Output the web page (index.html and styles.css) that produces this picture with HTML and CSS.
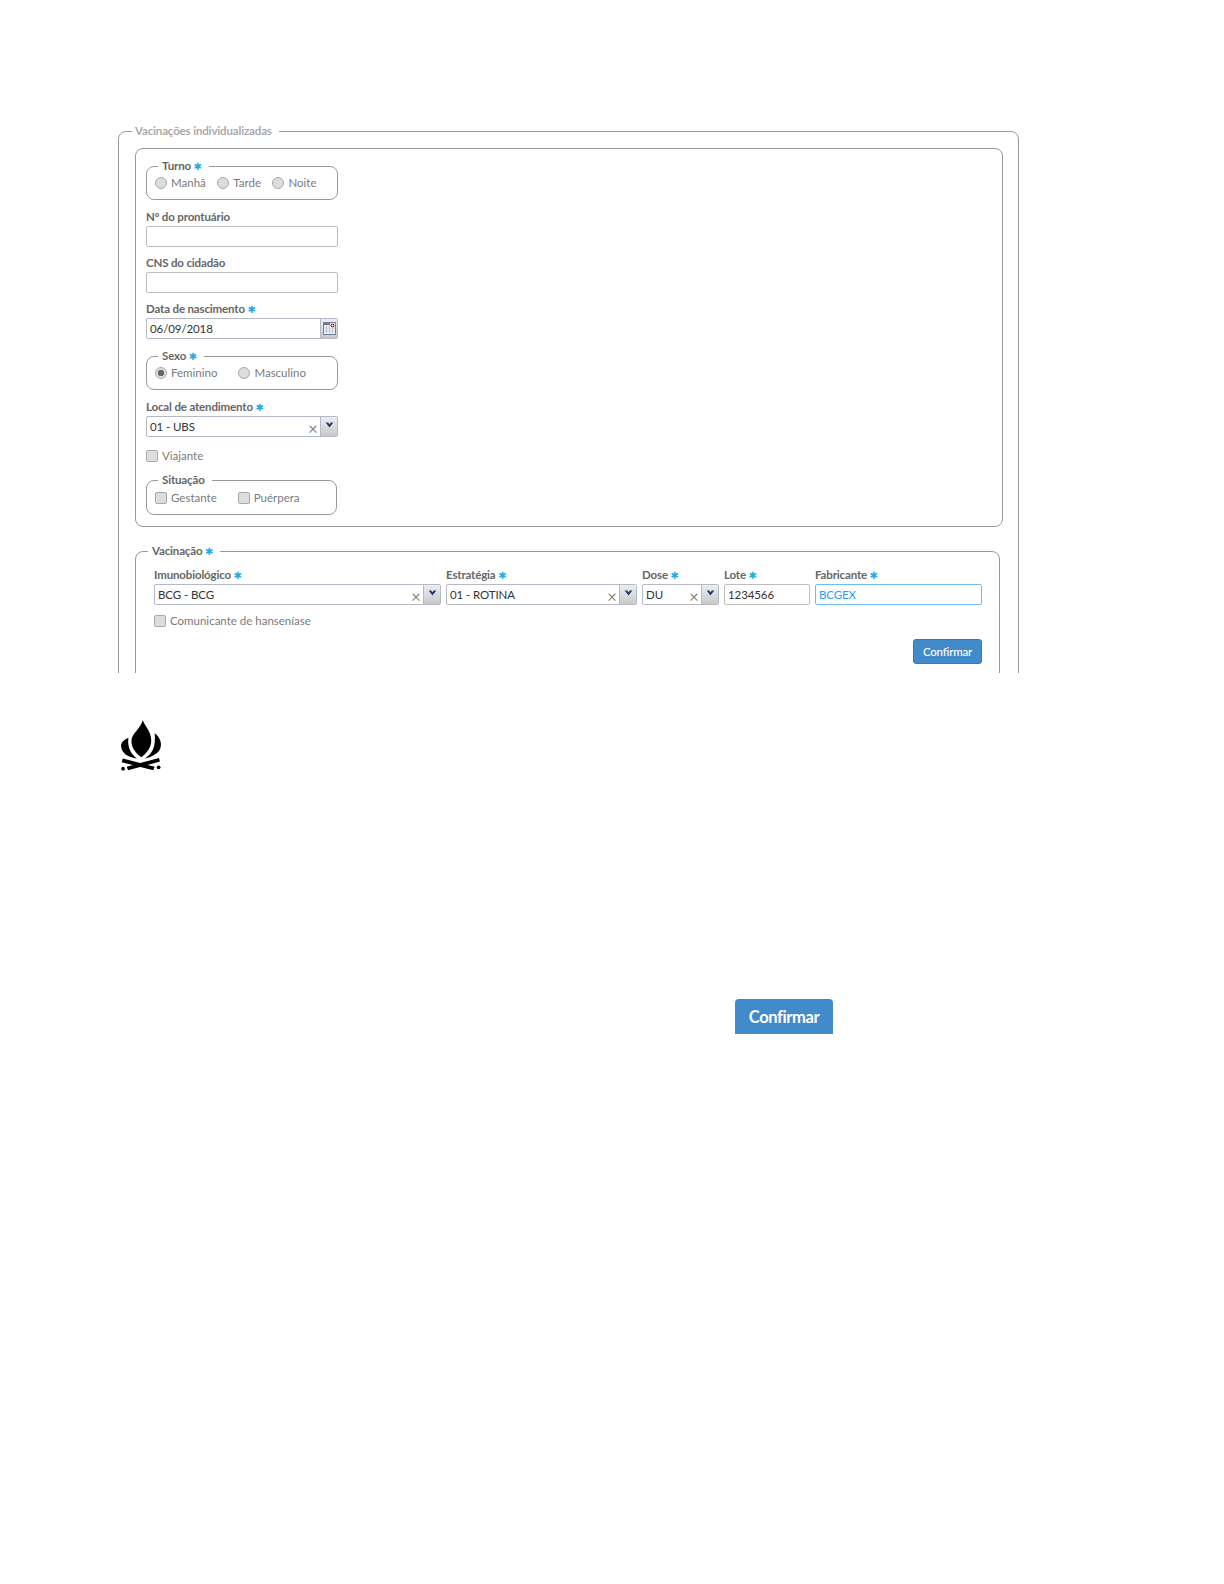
FILE: index.html
```html
<!DOCTYPE html>
<html lang="pt-BR">
<head>
  <meta charset="UTF-8">
  <title>Vacinações individualizadas</title>
  <link rel="stylesheet" href="styles.css">
</head>
<body>
  <div class="shot">
    <fieldset class="box box--outer">
      <legend class="box__title box__title--muted">Vacinações individualizadas</legend>

      <div class="patient">
        <fieldset class="box box--small">
          <legend class="box__title">Turno <span class="req">✱</span></legend>
          <div class="options">
            <label class="option"><input type="radio" name="turno"><span>Manhã</span></label>
            <label class="option"><input type="radio" name="turno"><span>Tarde</span></label>
            <label class="option"><input type="radio" name="turno"><span>Noite</span></label>
          </div>
        </fieldset>

        <div class="field field--patient">
          <div class="field__label">Nº do prontuário</div>
          <div class="input"></div>
        </div>

        <div class="field field--patient field--tight">
          <div class="field__label">CNS do cidadão</div>
          <div class="input"></div>
        </div>

        <div class="field field--patient field--tight">
          <div class="field__label">Data de nascimento <span class="req">✱</span></div>
          <div class="input input--addon">
            <span class="input__text">06/09/2018</span>
            <span class="addon">
              <svg width="13" height="13" viewBox="0 0 13 13">
                <rect x="0.5" y="0.5" width="12" height="12" fill="#eef0f5" stroke="#75839a"/>
                <rect x="1" y="1" width="11" height="2" fill="#66789a"/>
                <path d="M3.5 3v9M6.5 3v9M9.5 3v9M1 6h11M1 9h11" stroke="#c6ccd6" stroke-width="1"/>
                <rect x="7" y="1" width="5" height="5" fill="#fff"/>
                <circle cx="9.5" cy="3.5" r="1.5" fill="none" stroke="#8a1c2c" stroke-width="1.1"/>
              </svg>
            </span>
          </div>
        </div>

        <fieldset class="box box--small box--sexo">
          <legend class="box__title">Sexo <span class="req">✱</span></legend>
          <div class="options options--wide">
            <label class="option"><input type="radio" name="sexo" checked><span>Feminino</span></label>
            <label class="option"><input type="radio" name="sexo"><span>Masculino</span></label>
          </div>
        </fieldset>

        <div class="field field--patient">
          <div class="field__label">Local de atendimento <span class="req">✱</span></div>
          <div class="input input--addon">
            <span class="input__text">01 - UBS</span>
            <span class="clear">×</span>
            <span class="addon addon--arrow"><svg width="9" height="6" viewBox="0 0 10 7"><path d="M0.5 0.5h3L5 2.5l1.5-2h3L5 6.5z" fill="#24386b"/></svg></span>
          </div>
        </div>

        <label class="option option--alone"><input type="checkbox"><span>Viajante</span></label>

        <fieldset class="box box--small box--situacao">
          <legend class="box__title">Situação</legend>
          <div class="options options--wide options--check">
            <label class="option"><input type="checkbox"><span>Gestante</span></label>
            <label class="option"><input type="checkbox"><span>Puérpera</span></label>
          </div>
        </fieldset>
      </div>

      <fieldset class="box box--vaccine">
        <legend class="box__title">Vacinação <span class="req">✱</span></legend>
        <div class="vaccine-row">
          <div class="field field--imuno">
            <div class="field__label">Imunobiológico <span class="req">✱</span></div>
            <div class="input input--addon input--select">
              <span class="input__text">BCG - BCG</span>
              <span class="clear">×</span>
              <span class="addon addon--arrow"><svg width="9" height="6" viewBox="0 0 10 7"><path d="M0.5 0.5h3L5 2.5l1.5-2h3L5 6.5z" fill="#24386b"/></svg></span>
            </div>
          </div>
          <div class="field field--estrategia">
            <div class="field__label">Estratégia <span class="req">✱</span></div>
            <div class="input input--addon input--select">
              <span class="input__text">01 - ROTINA</span>
              <span class="clear">×</span>
              <span class="addon addon--arrow"><svg width="9" height="6" viewBox="0 0 10 7"><path d="M0.5 0.5h3L5 2.5l1.5-2h3L5 6.5z" fill="#24386b"/></svg></span>
            </div>
          </div>
          <div class="field field--dose">
            <div class="field__label">Dose <span class="req">✱</span></div>
            <div class="input input--addon input--select">
              <span class="input__text">DU</span>
              <span class="clear">×</span>
              <span class="addon addon--arrow"><svg width="9" height="6" viewBox="0 0 10 7"><path d="M0.5 0.5h3L5 2.5l1.5-2h3L5 6.5z" fill="#24386b"/></svg></span>
            </div>
          </div>
          <div class="field field--lote">
            <div class="field__label">Lote <span class="req">✱</span></div>
            <div class="input"><span class="input__text">1234566</span></div>
          </div>
          <div class="field field--fabricante">
            <div class="field__label">Fabricante <span class="req">✱</span></div>
            <div class="input input--focus"><span class="input__text">BCGEX</span></div>
          </div>
        </div>

        <label class="option option--comunicante"><input type="checkbox"><span>Comunicante de hanseníase</span></label>

        <div class="actions">
          <button class="btn" type="button">Confirmar</button>
        </div>
      </fieldset>
    </fieldset>
  </div>

  <svg class="flame" width="40" height="52" viewBox="47 45 119 155">
    <path d="M112 45C116 62 137 78 137 106C137 128 124 142 108 156C94 146 78 130 78 108C78 84 104 74 112 45Z"/>
    <path d="M69 98C66 122 72 142 94 160C74 158 47 146 47 122C47 110 58 104 69 98Z"/>
    <path d="M147 84C167 100 169 118 163 132C157 146 136 155 118 160C138 146 152 128 147 84Z"/>
    <path d="M52 160L49 171L143 195L147 184Z"/>
    <path d="M160 158L163 169L68 195L64 184Z"/>
    <circle cx="53" cy="190" r="5.5"/>
    <circle cx="159" cy="186" r="5.5"/>
  </svg>

  <div class="big-wrap">
    <button class="btn btn--big" type="button">Confirmar</button>
  </div>
</body>
</html>
```

FILE: styles.css
```css
* {
  margin: 0;
  box-sizing: border-box;
}

body {
  padding: 124px 0 0 118px;
  background-color: #fff;
  font-family: "Lato", sans-serif;
  font-size: 12px;
  color: #666;
}

.shot {
  width: 901px;
  height: 549px;
  overflow: hidden;
}

.box {
  min-width: 0;
  padding: 0;
  border: 1px solid #9a9a9a;
  border-radius: 8px;
}

.box__title {
  height: 14px;
  margin-left: 3px;
  padding: 0 7px 0 4px;
  font-size: 11.5px;
  font-weight: 700;
  line-height: 14px;
  letter-spacing: -0.15px;
  color: #666;
}

.box__title--muted {
  margin-left: -3px;
  padding-left: 3px;
  color: #aaa;
}

.box--outer {
  height: 700px;
  padding: 10px 15px 0 16px;
}

.patient {
  height: 379px;
  padding: 10px 10px 0;
  border: 1px solid #9a9a9a;
  border-radius: 8px;
}

.box--small {
  width: 192px;
  height: 41px;
  padding: 0 8px;
}

.box--sexo {
  margin-top: 10px;
}

.box--situacao {
  width: 191px;
  height: 42px;
  margin-top: 10px;
}

.box--vaccine {
  width: 865px;
  height: 200px;
  margin-top: 17px;
  padding: 10px 17px 0 18px;
}

.box--vaccine .box__title {
  margin-left: -6px;
}

.options {
  display: flex;
  gap: 11.5px;
  padding-top: 3px;
}

.options--wide {
  gap: 21px;
}

.options--check {
  padding-top: 4px;
}

.option {
  display: flex;
  align-items: center;
  gap: 4px;
  font-size: 11.5px;
  line-height: 14px;
  color: #7a7a7a;
}

.option--alone {
  margin-top: 12px;
}

.option--comunicante {
  margin-top: 9px;
}

.option input {
  appearance: none;
  flex: none;
  width: 12px;
  height: 12px;
  margin: 0;
  border: 1px solid #a8a8a8;
  background-color: #ddd;
}

.option input[type="radio"] {
  border-radius: 50%;
}

.option input[type="radio"]:checked {
  background: radial-gradient(circle, #666 0 3px, #ddd 3.5px);
}

.option input[type="checkbox"] {
  border-radius: 2px;
}

.field__label {
  height: 14px;
  margin-bottom: 2px;
  font-size: 11.5px;
  font-weight: 700;
  line-height: 14px;
  letter-spacing: -0.15px;
  white-space: nowrap;
  color: #666;
}

.field--patient {
  width: 192px;
  margin-top: 10px;
}

.field--tight {
  margin-top: 9px;
}

.input {
  display: flex;
  align-items: center;
  height: 21px;
  padding-left: 3px;
  border: 1px solid #bdbdbd;
  border-radius: 2px;
  font-size: 11.5px;
  letter-spacing: -0.1px;
  color: #333;
}

.input--addon {
  padding-right: 0;
  border-color: #b5b9c6;
}

.input__text {
  flex: 1;
  white-space: nowrap;
}

.input--focus {
  border-color: #6cbdf0;
  color: #2a9df4;
}

.clear {
  flex: none;
  width: 14px;
  padding-top: 4px;
  font-size: 17px;
  font-weight: 400;
  line-height: 14px;
  text-align: center;
  color: #888;
}

.addon {
  display: flex;
  flex: none;
  align-items: center;
  justify-content: center;
  width: 17px;
  height: 100%;
  border-left: 1px solid #b5b9c6;
  background: linear-gradient(#eceef2, #c9c9c9);
}

.addon--arrow {
  align-items: flex-start;
  padding-top: 5px;
}

.req {
  font-size: 10px;
  font-family: "DejaVu Sans", sans-serif;
  font-weight: 700;
  line-height: 0;
  color: #29abe2;
}

.vaccine-row {
  display: flex;
  gap: 5px;
}

.field--imuno { width: 287px; }
.field--estrategia { width: 191px; }
.field--dose { width: 77px; }
.field--lote { width: 86px; }
.field--fabricante { width: 167px; }

.actions {
  display: flex;
  justify-content: flex-end;
  margin-top: 11px;
}

.btn {
  width: 69px;
  height: 25px;
  padding: 0;
  border: 1px solid #3a78ad;
  border-radius: 3px;
  background-color: #428bca;
  font-family: "Lato", sans-serif;
  font-size: 11.5px;
  font-weight: 500;
  letter-spacing: -0.2px;
  color: #fff;
}

.flame {
  display: block;
  margin: 47px 0 0 3px;
}

.big-wrap {
  margin: 227px 0 0 617px;
}

.btn--big {
  width: 98px;
  height: 35px;
  border: 0;
  border-radius: 4px 4px 0 0;
  font-size: 16.5px;
  font-weight: 700;
  letter-spacing: -0.4px;
}
```
